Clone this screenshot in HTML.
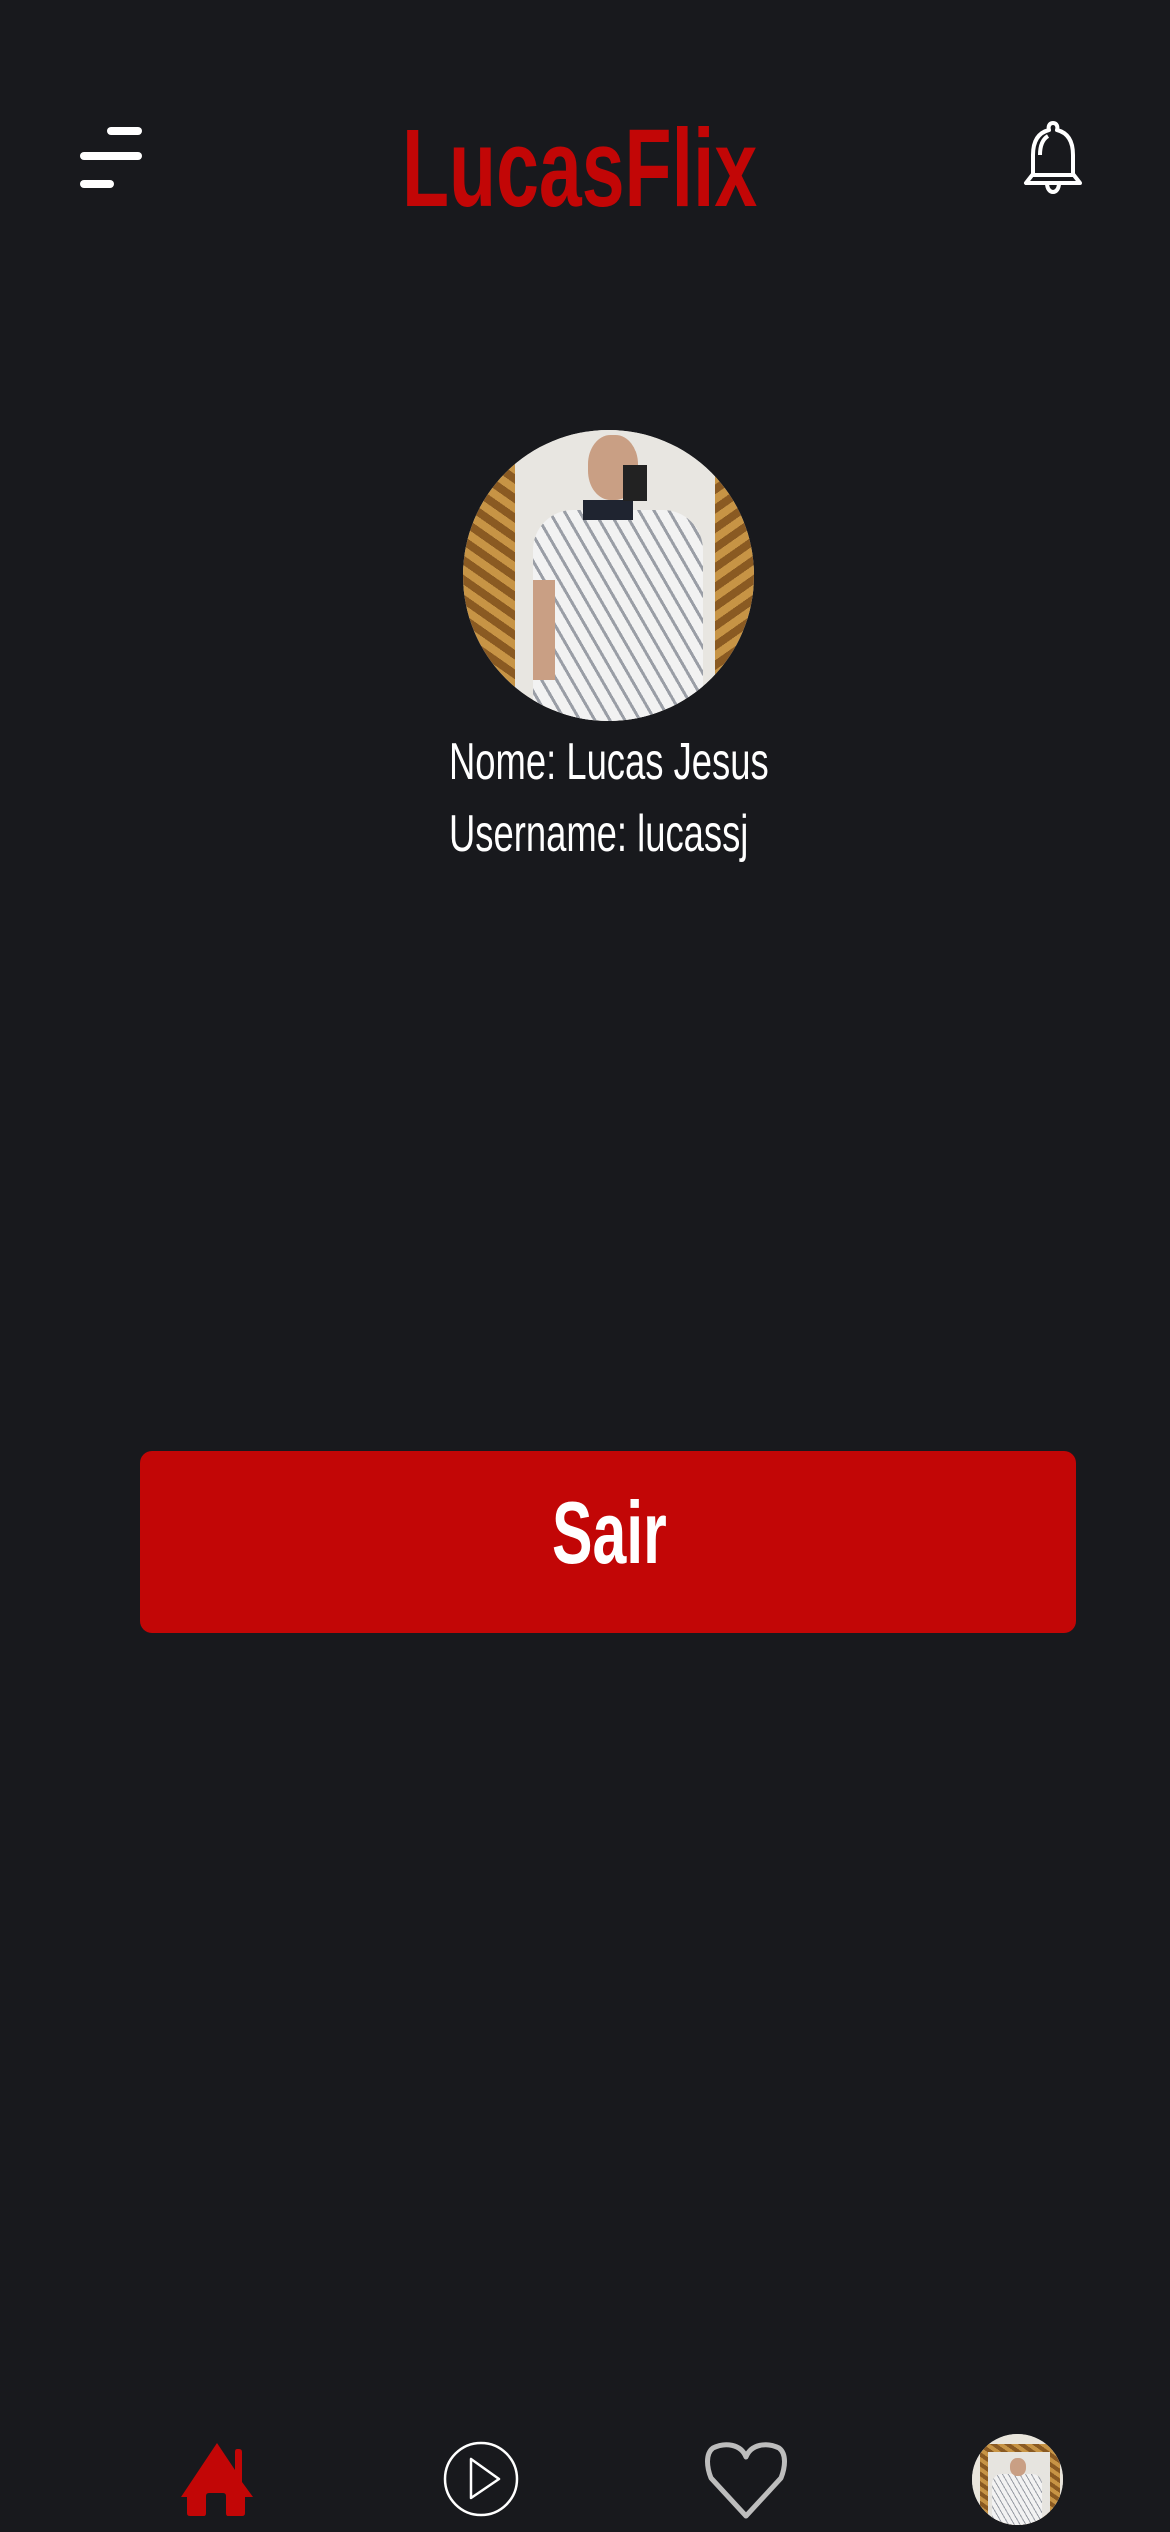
<!DOCTYPE html>
<html><head><meta charset="utf-8"><style>
html,body{margin:0;padding:0;background:#18191d;}
body{width:1170px;height:2532px;position:relative;overflow:hidden;font-family:"Liberation Sans",sans-serif;}
.abs{position:absolute;}
.t{position:absolute;white-space:nowrap;transform-origin:0 0;}
.av{position:absolute;border-radius:50%;overflow:hidden;background:#d9d7d2;}
</style></head><body>
<div class="abs" style="left:107px;top:127px;width:35px;height:8px;border-radius:4px;background:#fff"></div>
<div class="abs" style="left:80px;top:152px;width:62px;height:8px;border-radius:4px;background:#fff"></div>
<div class="abs" style="left:80px;top:180px;width:34px;height:8px;border-radius:4px;background:#fff"></div>
<div class="t" style="left:402px;top:114px;font-size:110px;font-weight:bold;color:#c20606;transform:scaleX(0.7);line-height:1">LucasFlix</div>
<svg class="abs" style="left:1018px;top:119px" width="70" height="80" viewBox="0 0 70 80">
<g fill="none" stroke="#fff" stroke-width="4" stroke-linejoin="round">
<path d="M35 4 C31 4 30 8 31 11 C19 14 15 24 15 36 L15 55 L8 64 L62 64 L55 55 L55 36 C55 24 51 14 39 11 C40 8 39 4 35 4 Z"/>
<path d="M14 56 L56 56"/>
<path d="M22 36 C22 26 25 20 30 17"/>
<path d="M29 64 C29 76 41 76 41 64"/>
</g></svg>
<div class="av" style="left:463px;top:430px;width:291px;height:291px;">
<div class="abs" style="left:0;top:0;width:52px;height:291px;background:repeating-linear-gradient(35deg,#8a5a22 0 8px,#c79445 8px 16px)"></div>
<div class="abs" style="right:0;top:0;width:40px;height:291px;background:repeating-linear-gradient(-35deg,#8a5a22 0 8px,#c79445 8px 16px)"></div>
<div class="abs" style="left:52px;top:0;width:200px;height:291px;background:#e8e6e1"></div>
<div class="abs" style="left:70px;top:80px;width:170px;height:230px;border-radius:40px 40px 0 0;background:repeating-linear-gradient(60deg,#f2f2f2 0 10px,#9a9ea6 10px 13px)"></div>
<div class="abs" style="left:120px;top:70px;width:50px;height:20px;background:#1f2430"></div>
<div class="abs" style="left:125px;top:5px;width:50px;height:65px;border-radius:45%;background:#c99f84"></div>
<div class="abs" style="left:160px;top:35px;width:24px;height:36px;background:#222"></div>
<div class="abs" style="left:70px;top:150px;width:22px;height:100px;background:#c99f84"></div>
</div>
<div class="t" style="left:449px;top:734px;font-size:52px;color:#fff;transform:scaleX(0.7);line-height:1.1">Nome: Lucas Jesus</div>
<div class="t" style="left:449px;top:806px;font-size:52px;color:#fff;transform:scaleX(0.7);line-height:1.1">Username: lucassj</div>
<div class="abs" style="left:140px;top:1451px;width:936px;height:182px;border-radius:12px;background:#c20606"></div>
<div class="t" style="left:552px;top:1489px;font-size:88px;font-weight:bold;color:#fff;transform:scaleX(0.69);line-height:1">Sair</div>
<svg class="abs" style="left:178px;top:2440px" width="78" height="78" viewBox="0 0 78 78">
<path fill="#c20606" d="M39 3 L3 57 L9 57 L9 73 Q9 76 12 76 L26 76 Q28 76 28 73 L28 56 Q28 53 31 53 L45 53 Q48 53 48 56 L48 73 Q48 76 50 76 L64 76 Q67 76 67 73 L67 57 L75 57 L64 42 L64 12 Q64 9 61 9 L59 9 Q57 9 57 12 L57 30 Z"/>
</svg>
<svg class="abs" style="left:442px;top:2440px" width="78" height="78" viewBox="0 0 78 78">
<ellipse cx="39" cy="39" rx="36" ry="36" fill="none" stroke="#fff" stroke-width="2.5"/>
<path d="M29 19 L29 58 L57 39 Z" fill="none" stroke="#fff" stroke-width="2.5" stroke-linejoin="round"/>
</svg>
<svg class="abs" style="left:705px;top:2440px" width="82" height="80" viewBox="0 0 82 80">
<path d="M41 17 C36 4 20 2 8 8 C0 14 2 28 6 38 L41 76 L76 38 C80 28 82 14 74 8 C62 2 46 4 41 17 Z" fill="none" stroke="#bdbdbd" stroke-width="5" stroke-linejoin="round"/>
</svg>
<div class="av" style="left:972px;top:2434px;width:91px;height:91px;">
<div class="abs" style="left:0;top:0;width:91px;height:91px;background:#e9e5dc"></div>
<div class="abs" style="left:8px;top:10px;width:80px;height:81px;background:repeating-linear-gradient(35deg,#8a5a22 0 4px,#c79445 4px 8px)"></div>
<div class="abs" style="left:16px;top:18px;width:62px;height:73px;background:#e6e4df"></div>
<div class="abs" style="left:20px;top:40px;width:50px;height:51px;border-radius:10px 10px 0 0;background:repeating-linear-gradient(60deg,#f2f2f2 0 4px,#9a9ea6 4px 5px)"></div>
<div class="abs" style="left:38px;top:24px;width:16px;height:18px;border-radius:45%;background:#c99f84"></div>
</div>
</body></html>
